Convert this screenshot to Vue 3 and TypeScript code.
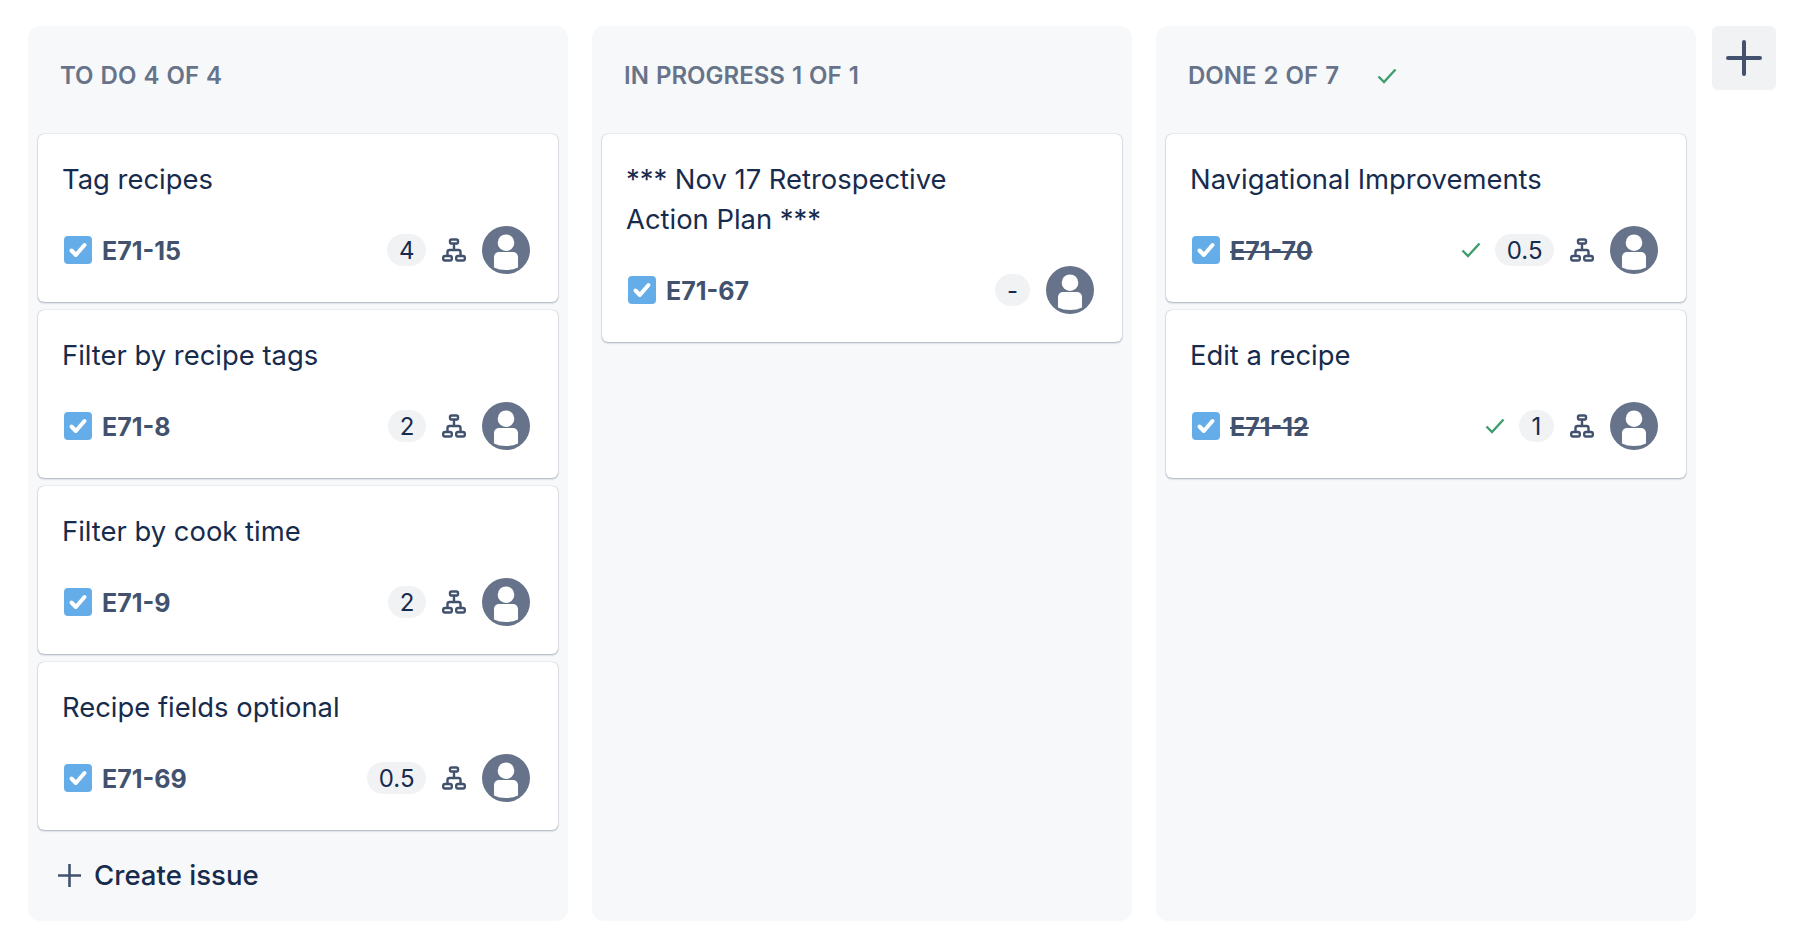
<script setup lang="ts">
type Issue = {
  title: string;
  key: string;
  estimate: string;
  hierarchy: boolean;
  done?: boolean;
};

type Column = {
  name: string;
  complete?: boolean;
  create?: boolean;
  issues: Issue[];
};

const columns: Column[] = [
  {
    name: "TO DO 4 OF 4",
    create: true,
    issues: [
      { title: "Tag recipes", key: "E71-15", estimate: "4", hierarchy: true },
      { title: "Filter by recipe tags", key: "E71-8", estimate: "2", hierarchy: true },
      { title: "Filter by cook time", key: "E71-9", estimate: "2", hierarchy: true },
      { title: "Recipe fields optional", key: "E71-69", estimate: "0.5", hierarchy: true },
    ],
  },
  {
    name: "IN PROGRESS 1 OF 1",
    issues: [
      { title: "*** Nov 17 Retrospective Action Plan ***", key: "E71-67", estimate: "-", hierarchy: false },
    ],
  },
  {
    name: "DONE 2 OF 7",
    complete: true,
    issues: [
      { title: "Navigational Improvements", key: "E71-70", estimate: "0.5", hierarchy: true, done: true },
      { title: "Edit a recipe", key: "E71-12", estimate: "1", hierarchy: true, done: true },
    ],
  },
];
</script>

<template>
  <div class="board">
    <section v-for="column in columns" :key="column.name" class="column">
      <header class="column-header">
        <h2>{{ column.name }}</h2>
        <svg v-if="column.complete" class="done-check header-check" viewBox="0 0 20 16" fill="none">
          <path d="M1.5 8.5 7 14 18.5 1.5" />
        </svg>
      </header>

      <div class="cards">
        <article v-for="issue in column.issues" :key="issue.key" class="card">
          <p class="title">{{ issue.title }}</p>
          <div class="footer">
            <svg class="type-icon" viewBox="0 0 28 28">
              <rect width="28" height="28" rx="4" fill="#65ade8" />
              <path d="M7.5 14.5 11.8 19 20.5 9" fill="none" stroke="#fff" stroke-width="4" stroke-linecap="round" stroke-linejoin="round" />
            </svg>
            <span class="key" :class="{ struck: issue.done }">{{ issue.key }}</span>
            <svg v-if="issue.done" class="done-check" viewBox="0 0 20 16" fill="none">
              <path d="M1.5 8.5 7 14 18.5 1.5" />
            </svg>
            <span class="estimate">{{ issue.estimate }}</span>
            <svg v-if="issue.hierarchy" class="hierarchy" viewBox="0 0 24 24" fill="none">
              <rect x="8" y="1.5" width="8" height="4" rx="1.6" />
              <path d="M12 5.5V12M5.5 18v-4a2 2 0 0 1 2-2h9a2 2 0 0 1 2 2v4" />
              <rect x="1.2" y="18" width="8.6" height="4.5" rx="1.8" />
              <rect x="14.2" y="18" width="8.6" height="4.5" rx="1.8" />
            </svg>
            <svg class="avatar" viewBox="0 0 48 48">
              <circle cx="24" cy="24" r="24" fill="#67738a" />
              <circle cx="24" cy="16.7" r="8.3" fill="#fff" />
              <path d="M17 26h14a5 5 0 0 1 5 5v10.5q-5 2.5-12 2.5t-12-2.5V31a5 5 0 0 1 5-5z" fill="#fff" />
            </svg>
          </div>
        </article>
      </div>

      <div v-if="column.create" class="create">
        <svg viewBox="0 0 25 25" fill="none">
          <path d="M12.5 1v23M1 12.5h23" />
        </svg>
        <span>Create issue</span>
      </div>
    </section>

    <button class="add-column" type="button" aria-label="Add column">
      <svg viewBox="0 0 36 36" fill="none">
        <path d="M18 2v32M2 18h32" />
      </svg>
    </button>
  </div>
</template>

<style scoped>
.board {
  display: flex;
  align-items: flex-start;
  gap: 24px;
  padding: 26px 0 0 28px;
  font-family: Inter, "Liberation Sans", sans-serif;
  color: #172b4d;
}

.column {
  flex: none;
  box-sizing: border-box;
  width: 540px;
  height: 895px;
  padding: 0 10px;
  border-radius: 12px;
  background: #f7f8fa;
}

.column-header {
  display: flex;
  align-items: center;
  height: 108px;
  padding: 0 0 9px 22px;
  box-sizing: border-box;
}

.column-header h2 {
  margin: 0;
  font-size: 24px;
  line-height: 32px;
  font-weight: 600;
  word-spacing: 1px;
  color: #667389;
}

.cards {
  display: flex;
  flex-direction: column;
  gap: 8px;
}

.card {
  padding: 25px 28px 28px 24px;
  border-radius: 6px;
  background: #fff;
  box-shadow: 0 1px 2px rgba(9, 30, 66, 0.3), 0 0 1px rgba(9, 30, 66, 0.35);
}

.title {
  max-width: 380px;
  margin: 0 0 27px;
  font-size: 27.4px;
  line-height: 40px;
}

.footer {
  display: flex;
  align-items: center;
  height: 48px;
  padding-left: 2px;
}

.type-icon {
  width: 28px;
  height: 28px;
  margin-right: 10px;
}

.key {
  margin-right: auto;
  padding-top: 1px;
  font-size: 25px;
  font-weight: 700;
  color: #42526e;
}

.struck {
  text-decoration: line-through;
}

.done-check {
  width: 20px;
  height: 16px;
  margin-right: 14px;
  stroke: #3f9e6e;
  stroke-width: 2.4;
}

.header-check {
  margin: 0 0 0 38px;
}

.estimate {
  min-width: 35px;
  height: 32px;
  padding: 0 11.5px;
  box-sizing: border-box;
  border-radius: 16px;
  background: #f1f2f4;
  font-size: 24px;
  line-height: 33px;
  text-align: center;
}

.hierarchy {
  width: 24px;
  height: 24px;
  margin-left: 16px;
  stroke: #42526e;
  stroke-width: 2.4;
}

.avatar {
  width: 48px;
  height: 48px;
  margin-left: 16px;
}

.create {
  display: flex;
  align-items: center;
  gap: 12px;
  height: 40px;
  margin-top: 25px;
  padding-left: 19px;
  font-size: 27.6px;
  font-weight: 500;
}

.create svg {
  width: 25px;
  height: 25px;
  stroke: #42526e;
  stroke-width: 2.6;
}

.add-column {
  display: flex;
  align-items: center;
  justify-content: center;
  flex: none;
  width: 64px;
  height: 64px;
  margin-left: -8px;
  padding: 0;
  border: 0;
  border-radius: 6px;
  background: #f1f2f4;
}

.add-column svg {
  width: 36px;
  height: 36px;
  stroke: #42526e;
  stroke-width: 4;
  stroke-linecap: round;
}
</style>
